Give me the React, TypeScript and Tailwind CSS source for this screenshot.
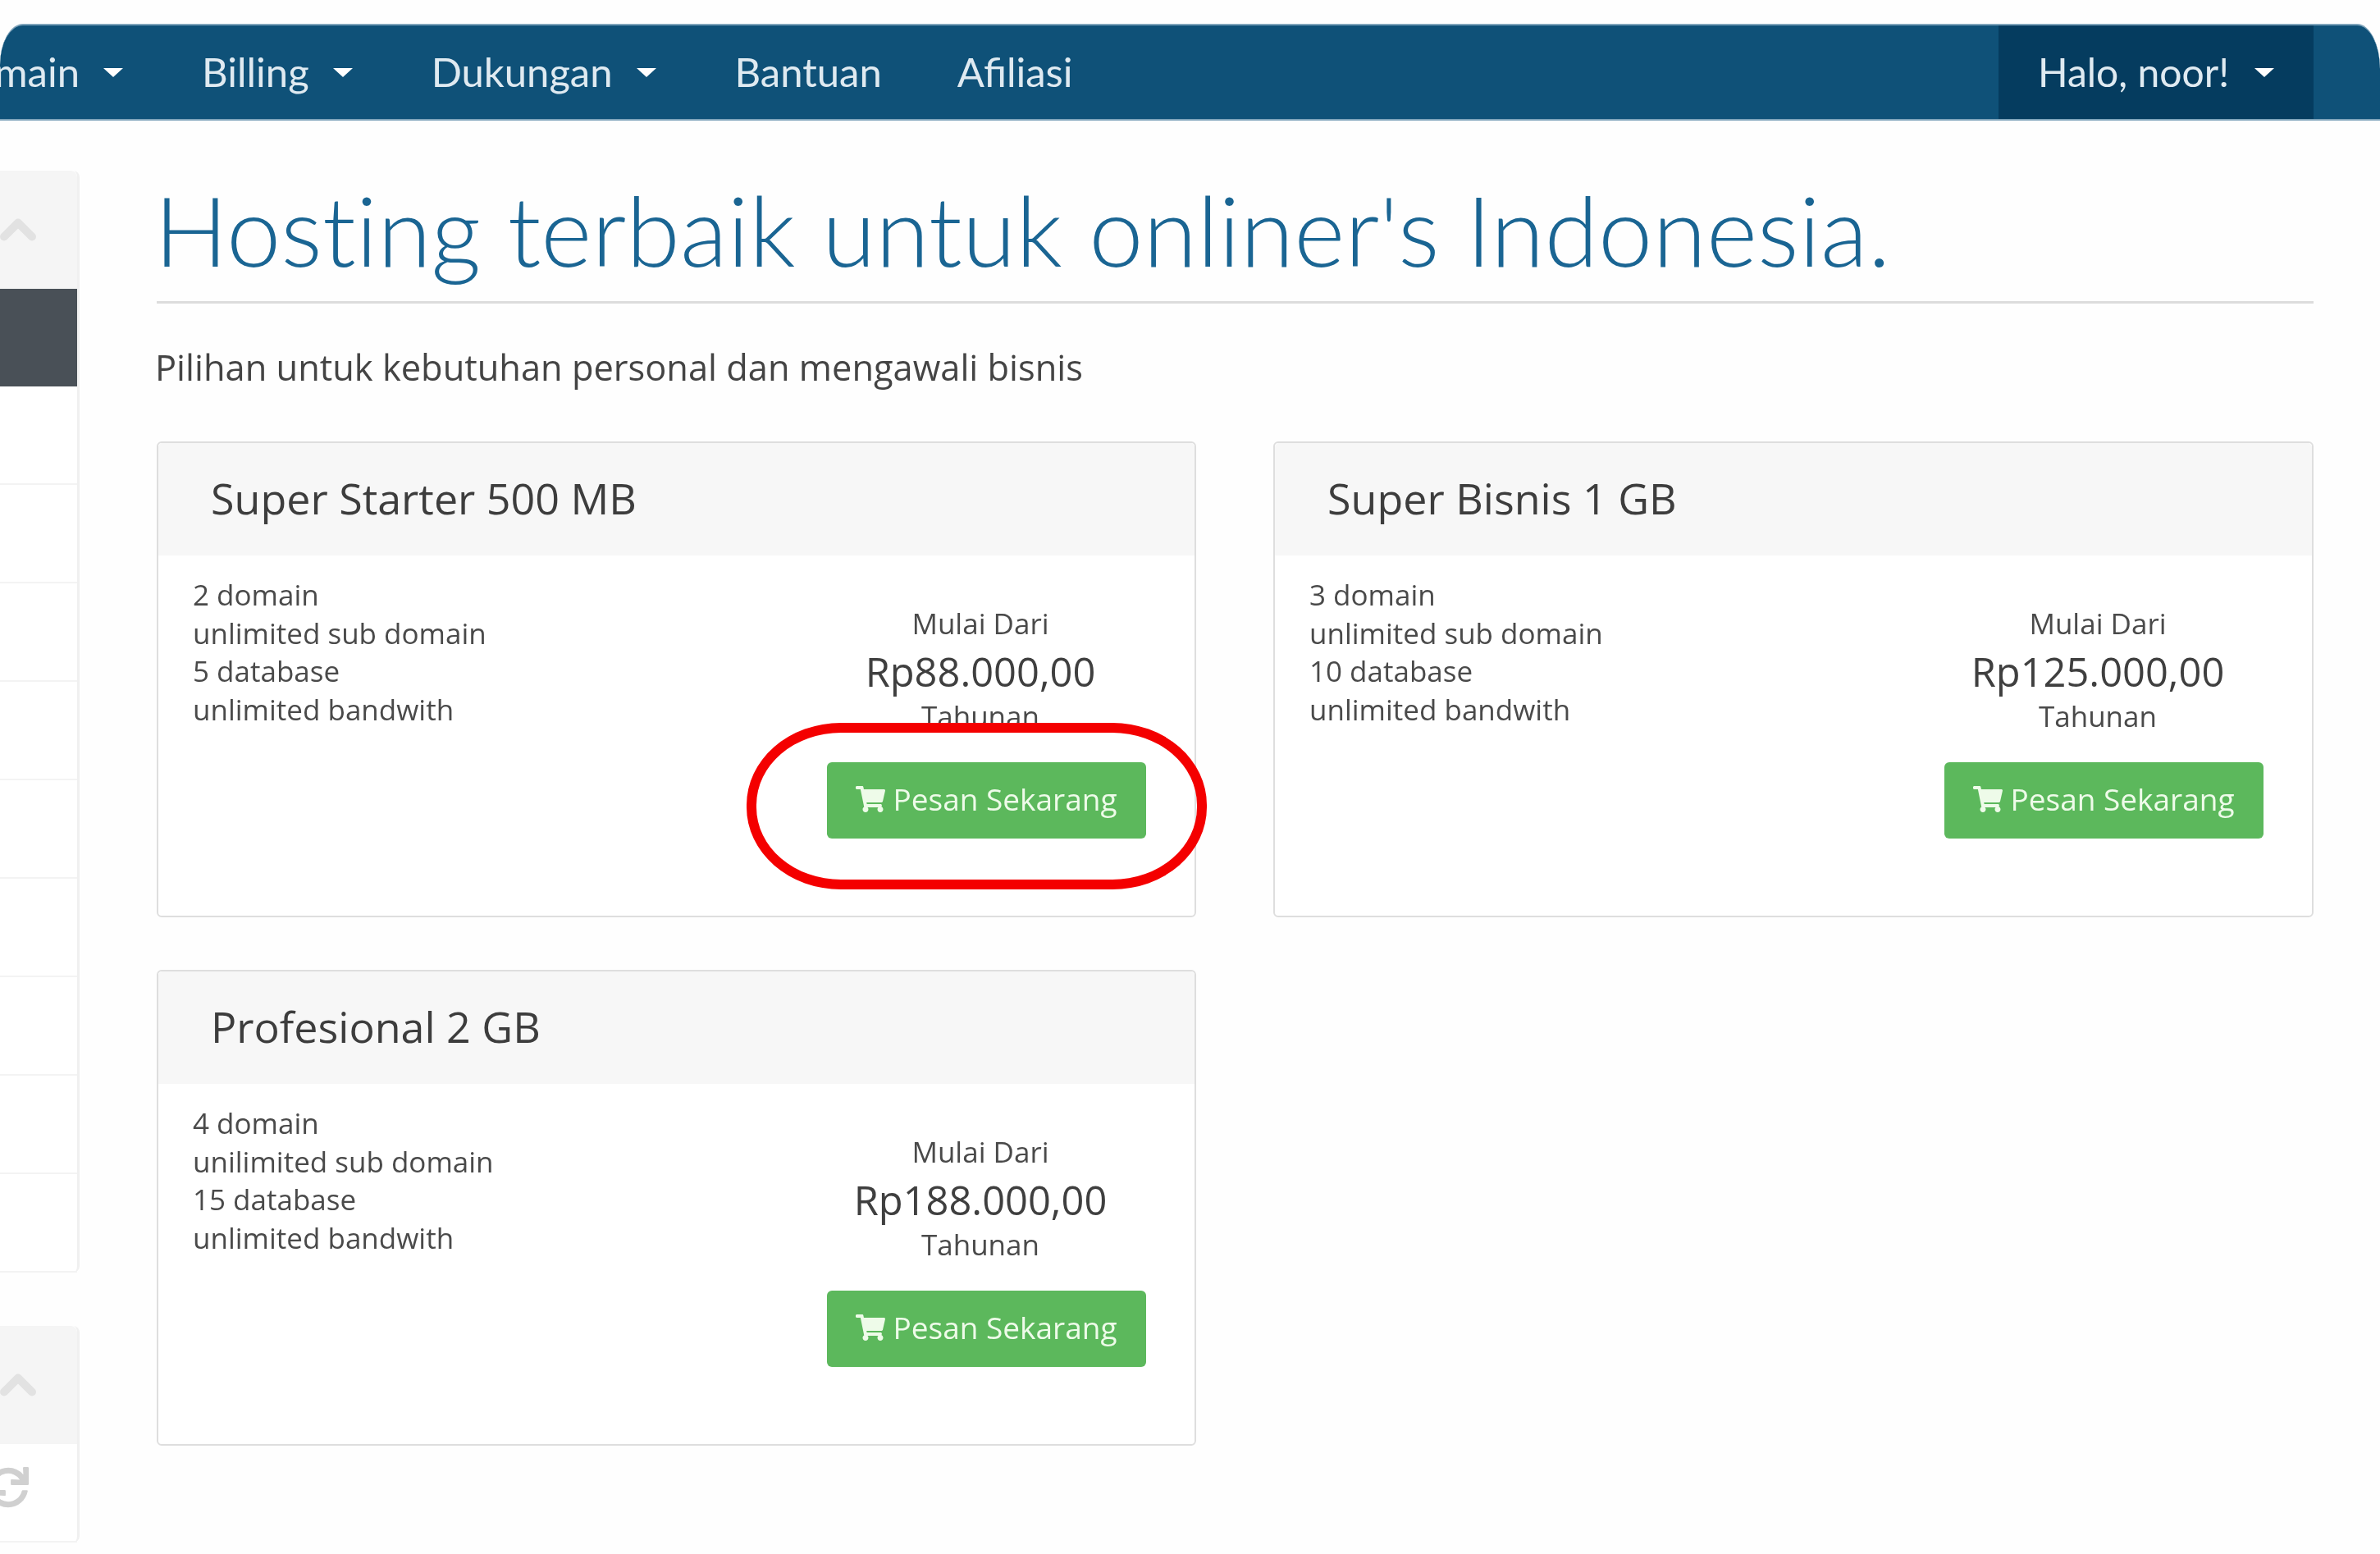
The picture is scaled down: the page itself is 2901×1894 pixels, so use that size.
import React from "react";
import { FaShoppingCart, FaSync } from "react-icons/fa";
import { ChevronUp } from "lucide-react";

const Caret = ({ wide }: { wide?: boolean }) => (
  <span
    className={
      wide
        ? "ml-[31px] inline-block h-0 w-0 border-x-[12px] border-t-[11px] border-x-transparent border-t-white"
        : "ml-[29px] inline-block h-0 w-0 border-x-[12px] border-t-[11px] border-x-transparent border-t-white"
    }
  />
);

const NavItem = ({ label, caret }: { label: string; caret?: boolean }) => (
  <div className="flex h-full items-center px-[48px]">
    <span>{label}</span>
    {caret && <Caret />}
  </div>
);

const plans = [
  { name: "Super Starter 500 MB", features: ["2 domain", "unlimited sub domain", "5 database", "unlimited bandwith"], price: "Rp88.000,00" },
  { name: "Super Bisnis 1 GB", features: ["3 domain", "unlimited sub domain", "10 database", "unlimited bandwith"], price: "Rp125.000,00" },
  { name: "Profesional 2 GB", features: ["4 domain", "unilimited sub domain", "15 database", "unlimited bandwith"], price: "Rp188.000,00" },
];

const Card = ({ plan }: { plan: (typeof plans)[number] }) => (
  <div className="h-[580px] rounded-[6px] border-2 border-[#dedede] bg-white">
    <div className="flex h-[137px] items-center rounded-t-[5px] bg-[#f7f7f7] pb-[3px] pl-[64px] text-[52px] text-[#3d3d3d]">
      {plan.name}
    </div>
    <div className="flex justify-between pl-[42px] pr-[52px]">
      <div className="pt-[25px] text-[35px] leading-[46.5px] text-[#4a4a4a]">
        {plan.features.map((f) => (
          <div key={f}>{f}</div>
        ))}
      </div>
      <div className="flex w-[418px] flex-col pt-[60px] text-center text-[#4a4a4a]">
        <div className="text-[35px] leading-[46px]">Mulai Dari</div>
        <div className="mt-[3px] text-[48.8px] leading-[64px] text-[#3f3f3f]">{plan.price}</div>
        <div className="text-[35px] leading-[46px]">Tahunan</div>
        <button className="ml-[22px] mt-[33px] flex h-[93px] w-[389px] items-center justify-center gap-[9px] rounded-[6px] bg-[#5cb85c] pb-[4px] text-[37px] text-[#eefbe9]">
          <FaShoppingCart className="h-[32px] w-[36px]" />
          Pesan Sekarang
        </button>
      </div>
    </div>
  </div>
);

const SidePanel = ({ rows, dark }: { rows: number; dark?: boolean }) => (
  <div className="w-[97px] rounded-r-[8px] border-r-[3px] border-[#f0f0f0] bg-white">
    <div className="flex h-[144px] items-center rounded-tr-[8px] bg-[#f5f5f5]">
      <ChevronUp className="-ml-[12px] h-[68px] w-[68px] text-[#e2e2e2]" strokeWidth={3.5} />
    </div>
    {dark && <div className="h-[119px] bg-[#495057]" />}
    {Array.from({ length: rows }).map((_, i) => (
      <div key={i} className="h-[120px] border-b-2 border-[#f3f3f3]" />
    ))}
  </div>
);

export default function App() {
  return (
    <div className="relative h-[1894px] w-[2901px] overflow-hidden bg-[#fefefe] font-['Open_Sans','Liberation_Sans',sans-serif]">
      <div className="h-full pt-[29px] blur-[0.7px]">
        <nav className="flex h-[118px] items-center overflow-hidden rounded-tl-[28px_50px] rounded-tr-[28px_55px] border-y-2 border-[#7ea3ba] bg-[#0f5178] font-['Lato','Open_Sans',sans-serif] text-[49px] text-[#dfeaf1]">
          <div className="flex h-full w-[198px] shrink-0 items-center justify-end pr-[48px]">
            <span>Domain</span>
            <Caret />
          </div>
          <NavItem label="Billing" caret />
          <NavItem label="Dukungan" caret />
          <div className="flex h-full items-center pl-[48px] pr-[44px]">Bantuan</div>
          <NavItem label="Afiliasi" />
          <div className="ml-auto mr-[81px] flex h-full w-[384px] items-center bg-[#053c5f] pl-[48px] text-[48px]">
            <span>Halo, noor!</span>
            <Caret wide />
          </div>
        </nav>

        <div className="flex pt-[61px]">
          <div className="flex w-[97px] shrink-0 flex-col gap-[65px]">
            <SidePanel rows={9} dark />
            <SidePanel rows={1} />
          </div>
          <main className="ml-[94px] w-[2629px]">
            <h1 className="border-b-[3px] border-[#dcdcdc] pb-[22px] pt-[5px] font-['Lato','Open_Sans',sans-serif] text-[119px] font-light leading-[132px] text-[#1a6593] [font-variant-ligatures:none] [text-indent:-3px]">
              Hosting terbaik untuk onliner's Indonesia.
            </h1>
            <p className="-ml-[2px] mt-[50px] text-[43.4px] leading-[56px] text-[#444]">
              Pilihan untuk kebutuhan personal dan mengawali bisnis
            </p>
            <div className="mt-[62px] grid grid-cols-[1267px_1268px] gap-x-[94px] gap-y-[64px]">
              {plans.map((p) => (
                <Card key={p.name} plan={p} />
              ))}
            </div>
          </main>
        </div>

        <FaSync className="absolute -left-[15px] top-[1788px] h-[50px] w-[50px] text-[#d0d0d0]" />
      </div>
      <div className="absolute left-[910px] top-[881px] h-[203px] w-[561px] rounded-[115px/100px] border-[12px] border-[#f40000]" />
    </div>
  );
}
